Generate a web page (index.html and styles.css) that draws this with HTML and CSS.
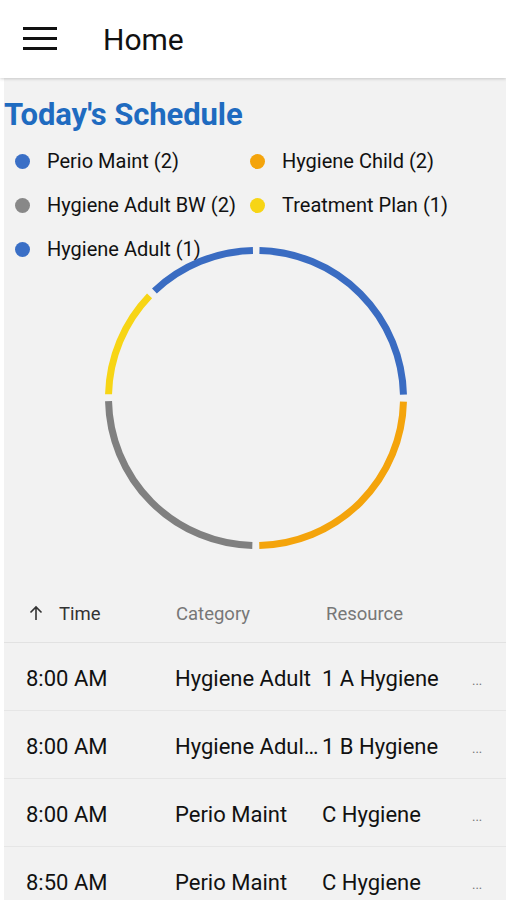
FILE: index.html
```html
<!DOCTYPE html>
<html>
<head>
<meta charset="utf-8">
<link rel="stylesheet" href="styles.css">
</head>
<body>
<header class="appbar">
  <div class="hamburger"><span></span><span></span><span></span></div>
  <div class="appbar-title">Home</div>
</header>
<main class="content">
  <h1 class="title">Today's Schedule</h1>
  <ul class="legend">
    <li><i class="dot blue"></i>Perio Maint (2)</li>
    <li><i class="dot orange"></i>Hygiene Child (2)</li>
    <li><i class="dot gray"></i>Hygiene Adult BW (2)</li>
    <li><i class="dot yellow"></i>Treatment Plan (1)</li>
    <li><i class="dot blue"></i>Hygiene Adult (1)</li>
  </ul>
  <div class="chart">
    <svg width="302" height="302" viewBox="0 0 302 302">
      <g transform="rotate(-90 151 151)" fill="none" stroke-width="7">
        <circle cx="151" cy="151" r="147.5" stroke="#3a6cc2" stroke-dasharray="224.7 926.8" stroke-dashoffset="-3.5"/>
        <circle cx="151" cy="151" r="147.5" stroke="#f4a40c" stroke-dasharray="224.7 926.8" stroke-dashoffset="-235.2"/>
        <circle cx="151" cy="151" r="147.5" stroke="#808080" stroke-dasharray="224.7 926.8" stroke-dashoffset="-466.9"/>
        <circle cx="151" cy="151" r="147.5" stroke="#f7d515" stroke-dasharray="108.9 926.8" stroke-dashoffset="-698.6"/>
        <circle cx="151" cy="151" r="147.5" stroke="#3a6cc2" stroke-dasharray="108.9 926.8" stroke-dashoffset="-814.4"/>
      </g>
    </svg>
  </div>
  <div class="table">
    <div class="thead">
      <div class="th th-time"><svg class="arrow" width="14" height="16" viewBox="0 0 14 16"><path d="M7 15V2M1.5 7.5L7 2l5.5 5.5" fill="none" stroke="#333" stroke-width="1.6"/></svg>Time</div>
      <div class="th th-cat">Category</div>
      <div class="th th-res">Resource</div>
      <div class="th"></div>
    </div>
    <div class="row">
      <div class="cell">8:00 AM</div>
      <div class="cell">Hygiene Adult</div>
      <div class="cell">1 A Hygiene</div>
      <div class="cell more">...</div>
    </div>
    <div class="row">
      <div class="cell">8:00 AM</div>
      <div class="cell">Hygiene Adult BW</div>
      <div class="cell">1 B Hygiene</div>
      <div class="cell more">...</div>
    </div>
    <div class="row">
      <div class="cell">8:00 AM</div>
      <div class="cell">Perio Maint</div>
      <div class="cell">C Hygiene</div>
      <div class="cell more">...</div>
    </div>
    <div class="row">
      <div class="cell">8:50 AM</div>
      <div class="cell">Perio Maint</div>
      <div class="cell">C Hygiene</div>
      <div class="cell more">...</div>
    </div>
  </div>
</main>
</body>
</html>
```

FILE: styles.css
```css
* { box-sizing: border-box; }
html, body { margin: 0; padding: 0; }
body {
  background: #ffffff;
  font-family: Roboto, "Liberation Sans", Arial, sans-serif;
  color: #111;
  width: 506px;
  height: 900px;
  overflow: hidden;
}
.appbar {
  height: 78px;
  background: #ffffff;
  display: flex;
  align-items: center;
  padding-left: 23px;
  position: relative;
  z-index: 2;
  box-shadow: 0 1px 3px rgba(0,0,0,0.18);
}
.hamburger {
  width: 34px;
  display: flex;
  flex-direction: column;
  gap: 7px;
  margin-top: -1px;
}
.hamburger span {
  display: block;
  height: 3px;
  background: #111;
}
.appbar-title {
  margin-left: 46px;
  font-size: 30px;
  color: #111;
  margin-top: 1px;
}
.content {
  margin-left: 4px;
  background: #f2f2f2;
  height: 822px;
  padding-top: 19px;
}
.title {
  margin: 0;
  font-size: 31px;
  font-weight: 700;
  color: #1f6bc0;
  line-height: 36px;
  letter-spacing: -0.1px;
}
.legend {
  list-style: none;
  margin: 17px 0 0 0;
  padding: 0 0 0 11px;
  display: grid;
  grid-template-columns: 235px 1fr;
  grid-auto-rows: 44px;
  font-size: 20px;
  color: #111;
}
.legend li {
  display: flex;
  align-items: center;
  white-space: nowrap;
  height: 22px;
}
.dot {
  width: 15px;
  height: 15px;
  border-radius: 50%;
  margin-right: 17px;
  flex: none;
}
.blue { background: #3a6fc6; }
.orange { background: #f4a40c; }
.gray { background: #888888; }
.yellow { background: #f7d515; }
.chart {
  display: flex;
  justify-content: center;
  margin-top: -35px;
  padding-left: 2px;
}
.chart svg { display: block; }
.table {
  margin-top: 54px;
}
.thead {
  display: grid;
  grid-template-columns: 147px 150px 145px 1fr;
  height: 40px;
  align-items: start;
  padding-left: 25px;
  border-bottom: 1px solid #e2e2e2;
  font-size: 18.5px;
}
.th { color: #777; white-space: nowrap; }
.th-time { color: #333; display: flex; align-items: center; }
.arrow { margin-right: 16px; margin-top: -2px; }
.row {
  display: grid;
  grid-template-columns: 149px 147px 148px 1fr;
  height: 68px;
  align-items: center;
  padding-left: 22px;
  padding-top: 4px;
  border-bottom: 1px solid #e6e6e6;
  font-size: 22px;
  color: #111;
}
.cell {
  white-space: nowrap;
  overflow: hidden;
  text-overflow: ellipsis;
  padding-right: 2px;
}
.more {
  font-size: 13px;
  color: #777;
  padding-left: 2px;
  padding-top: 4px;
}
```
